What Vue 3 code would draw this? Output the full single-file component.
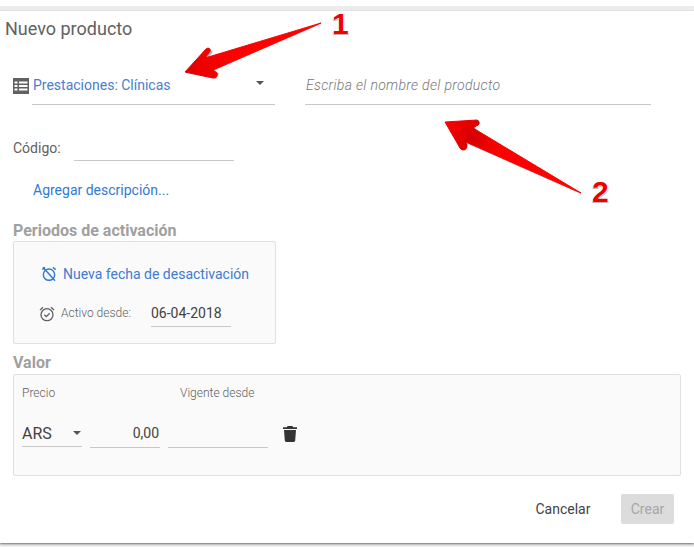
<script setup>
</script>

<template>
  <div class="page">
    <div class="band"></div>
    <main class="dialog">
      <h1 class="title">Nuevo producto</h1>
      <div class="row-main">
        <svg class="list-icon" width="16" height="16" viewBox="0 0 16 16">
          <path fill="#616161" d="M0 0h16v16H0z" />
          <path fill="#fff" d="M1.5 3.5h3v2h-3zM6 3.5h8.500v2H6zM1.500 7h3v2h-3zM6 7h8.500v2H6zM1.500 10.500h3v2h-3zM6 10.500h8.500v2H6z" />
        </svg>
        <div class="select-main">
          <span>Prestaciones: Clínicas</span>
          <i class="caret caret-up"></i>
        </div>
        <div class="name-input">Escriba el nombre del producto</div>
      </div>
      <div class="code-row">
        <span class="code-label">Código:</span>
        <div class="code-input"></div>
      </div>
      <a class="add-link">Agregar descripción...</a>
      <h2 class="section periods-title">Periodos de activación</h2>
      <section class="box periods">
        <div class="new-date">
          <svg width="16" height="16" viewBox="0 0 24 24" fill="none" stroke="#2f7ad6" stroke-width="2.200">
            <circle cx="12" cy="13" r="8.500" />
            <path d="M2 5.500 6 2M22 5.500 18 2M3 2l18 20" />
          </svg>
          <span>Nueva fecha de desactivación</span>
        </div>
        <div class="active-row">
          <svg width="16" height="16" viewBox="0 0 24 24" fill="none" stroke="#616161" stroke-width="2">
            <circle cx="12" cy="13" r="9" />
            <path d="M1.500 6l4.500-4M22.500 6l-4.500-4M8 13l3 3 5-5" />
          </svg>
          <span class="active-label">Activo desde:</span>
          <div class="date-input">06-04-2018</div>
        </div>
      </section>
      <h2 class="section value-title">Valor</h2>
      <section class="box value">
        <div class="value-labels">
          <span class="price-label">Precio</span>
          <span>Vigente desde</span>
        </div>
        <div class="value-row">
          <div class="currency"><span>ARS</span><i class="caret"></i></div>
          <div class="amount">0,00</div>
          <div class="since"></div>
          <svg class="trash" width="14" height="16" viewBox="0 0 14 16">
            <path fill="#333" d="M4.500 0h5l.6 1.200H14v1.800H0V1.200h3.900zM1 4h12l-.8 10.600c-.1.800-.7 1.400-1.500 1.400H3.300c-.8 0-1.400-.6-1.500-1.400z" />
          </svg>
        </div>
      </section>
      <div class="actions">
        <button class="cancel" type="button">Cancelar</button>
        <button class="create" type="button" disabled>Crear</button>
      </div>
    </main>
    <div class="foot"></div>

    <svg class="arrows" width="694" height="547" viewBox="0 0 694 547">
      <defs>
        <linearGradient id="a1" x1="185" y1="72" x2="321" y2="23" gradientUnits="userSpaceOnUse">
          <stop offset="0" stop-color="#e00000" />
          <stop offset="0.3" stop-color="#ff0000" />
        </linearGradient>
        <linearGradient id="a2" x1="445" y1="122" x2="581" y2="193" gradientUnits="userSpaceOnUse">
          <stop offset="0" stop-color="#ff0000" />
          <stop offset="0.2" stop-color="#d80000" />
          <stop offset="0.4" stop-color="#ff0000" />
        </linearGradient>
      </defs>
      <path class="arrow-shadow" d="M186 73 209 49 213 52 209 57 321 24 215 70 219 74 216 79Z" />
      <path fill="url(#a1)" stroke="url(#a1)" stroke-width="1" stroke-linejoin="round" d="M185 72 206 49Q208 47 210 49 211 51 209 53L205 58 321 23 213 70 217 73Q218 76 216 77 215 78 213 78Z" />
      <path class="arrow-shadow" d="M446 123 477 124 475 130 581 194 468 144 465 151 461 148Z" />
      <path fill="url(#a2)" stroke="url(#a2)" stroke-width="1" stroke-linejoin="round" d="M445 122 477 120Q480 121 479 124 478 126 476 126L473 128 581 193 466 142 467 147Q466 150 463 150 461 150 460 148Z" />
    </svg>
    <span class="num num-1">1</span>
    <span class="num num-2">2</span>
  </div>
</template>

<style>
html, body { margin: 0; padding: 0; background: #fff; }
</style>

<style scoped>
.page {
  position: relative;
  width: 694px;
  height: 547px;
  overflow: hidden;
  padding-top: 6px;
  box-sizing: border-box;
  background: #fff;
  font-family: Roboto, "Liberation Sans", sans-serif;
  font-size: 14px;
  color: #424242;
}
.band { height: 5px; background: #ececec; }
.dialog {
  position: relative;
  z-index: 1;
  box-sizing: border-box;
  height: 532px;
  padding: 7px 13px 0;
  background: #fff;
  box-shadow: 0 1px 2px rgba(0, 0, 0, 0.55);
}
.foot { height: 4px; background: #eee; }
.title {
  margin: 0 0 0 -8px;
  font-size: 18px;
  font-weight: 400;
  line-height: 21px;
  color: #616161;
}
.row-main { display: flex; align-items: flex-start; margin-top: 28px; height: 38px; }
.list-icon { margin-top: 11px; flex: none; }
.select-main {
  box-sizing: border-box;
  display: flex;
  align-items: center;
  justify-content: space-between;
  width: 243px;
  height: 38px;
  margin-left: 3px;
  padding: 0 11px 1px 1px;
  border-bottom: 1px solid #c8c8c8;
  color: #4a7dd0;
}
.caret {
  display: block;
  width: 0;
  height: 0;
  border: 4px solid transparent;
  border-top: 4px solid #555;
  border-bottom: 0;
}
.caret-up { margin-bottom: 5px; }
.name-input {
  box-sizing: border-box;
  width: 346px;
  height: 38px;
  margin-left: 30px;
  padding: 10px 0 0 1px;
  line-height: 17px;
  border-bottom: 1px solid #c8c8c8;
  font-style: italic;
  font-weight: 300;
  letter-spacing: 0.32px;
  color: #757575;
}
.code-row { display: flex; margin-top: 21px; height: 35px; }
.code-label { width: 61px; padding-top: 14px; line-height: 17px; color: #616161; }
.code-input { width: 160px; height: 34px; border-bottom: 1px solid #c8c8c8; }
.add-link { display: block; margin: 21px 0 0 20px; line-height: 17px; color: #2f7ad6; cursor: pointer; }
.section { margin: 0; font-size: 16px; font-weight: 700; line-height: 18px; color: #a0a0a0; }
.periods-title { margin-top: 23px; }
.box {
  box-sizing: border-box;
  background: #fafafa;
  border: 1px solid #e0e0e0;
  border-radius: 2px;
}
.periods { width: 263px; height: 103px; margin-top: 1px; padding: 23px 0 0 27px; }
.new-date { display: flex; align-items: center; gap: 6px; height: 17px; color: #3f7ad4; }
.active-row { display: flex; align-items: flex-start; margin: 14px 0 0 -2px; }
.active-row svg { margin-top: 10px; flex: none; }
.active-label { width: 90px; margin-left: 6px; padding-top: 10px; font-size: 12px; font-weight: 300; line-height: 14px; color: #616161; }
.date-input {
  box-sizing: border-box;
  width: 80px;
  height: 31px;
  padding-top: 9px;
  line-height: 17px;
  border-bottom: 1px solid #c8c8c8;
  color: #424242;
}
.value-title { margin-top: 10px; }
.value { width: 668px; height: 102px; margin-top: 2px; padding: 11px 0 0 8px; }
.value-labels { display: flex; height: 14px; font-size: 12px; font-weight: 300; line-height: 14px; color: #616161; }
.price-label { width: 158px; }
.value-row { display: flex; align-items: flex-start; margin-top: 18px; }
.currency {
  box-sizing: border-box;
  display: flex;
  align-items: center;
  justify-content: space-between;
  width: 60px;
  height: 29px;
  padding: 2px 1px 0 0;
  border-bottom: 1px solid #c8c8c8;
  font-size: 16px;
  color: #424242;
}
.amount {
  box-sizing: border-box;
  width: 70px;
  height: 30px;
  margin-left: 8px;
  padding: 7px 1px 0 0;
  line-height: 17px;
  text-align: right;
  border-bottom: 1px solid #c8c8c8;
}
.since { width: 100px; height: 30px; margin-left: 8px; box-sizing: border-box; border-bottom: 1px solid #c8c8c8; }
.trash { margin: 8px 0 0 15px; }
.actions { display: flex; justify-content: flex-end; align-items: center; width: 661px; margin-top: 18px; }
.cancel, .create {
  font-family: inherit;
  font-size: 14px;
  border: 0;
  padding: 0;
  height: 30px;
  border-radius: 2px;
}
.cancel { background: none; color: #424242; margin-right: 30px; width: 56px; }
.create { width: 53px; background: #dcdcdc; color: #a6a6a6; }
.arrows { position: absolute; z-index: 2; left: 0; top: 0; pointer-events: none; }
.arrow-shadow { fill: #8a8a8a; opacity: 0.6; }
.num {
  position: absolute;
  z-index: 2;
  font-family: "Liberation Sans", Arial, sans-serif;
  font-size: 30px;
  font-weight: 700;
  line-height: 30px;
  color: #f20000;
  text-shadow: 1px 0 0 #fff, -1px 0 0 #fff, 0 -1px 0 #fff, 0 1px 0 #bbb, 1px 1px 0 #bbb, -1px 1px 0 #bbb;
}
.num-1 { left: 332px; top: 9px; }
.num-2 { left: 592px; top: 177px; }
</style>
